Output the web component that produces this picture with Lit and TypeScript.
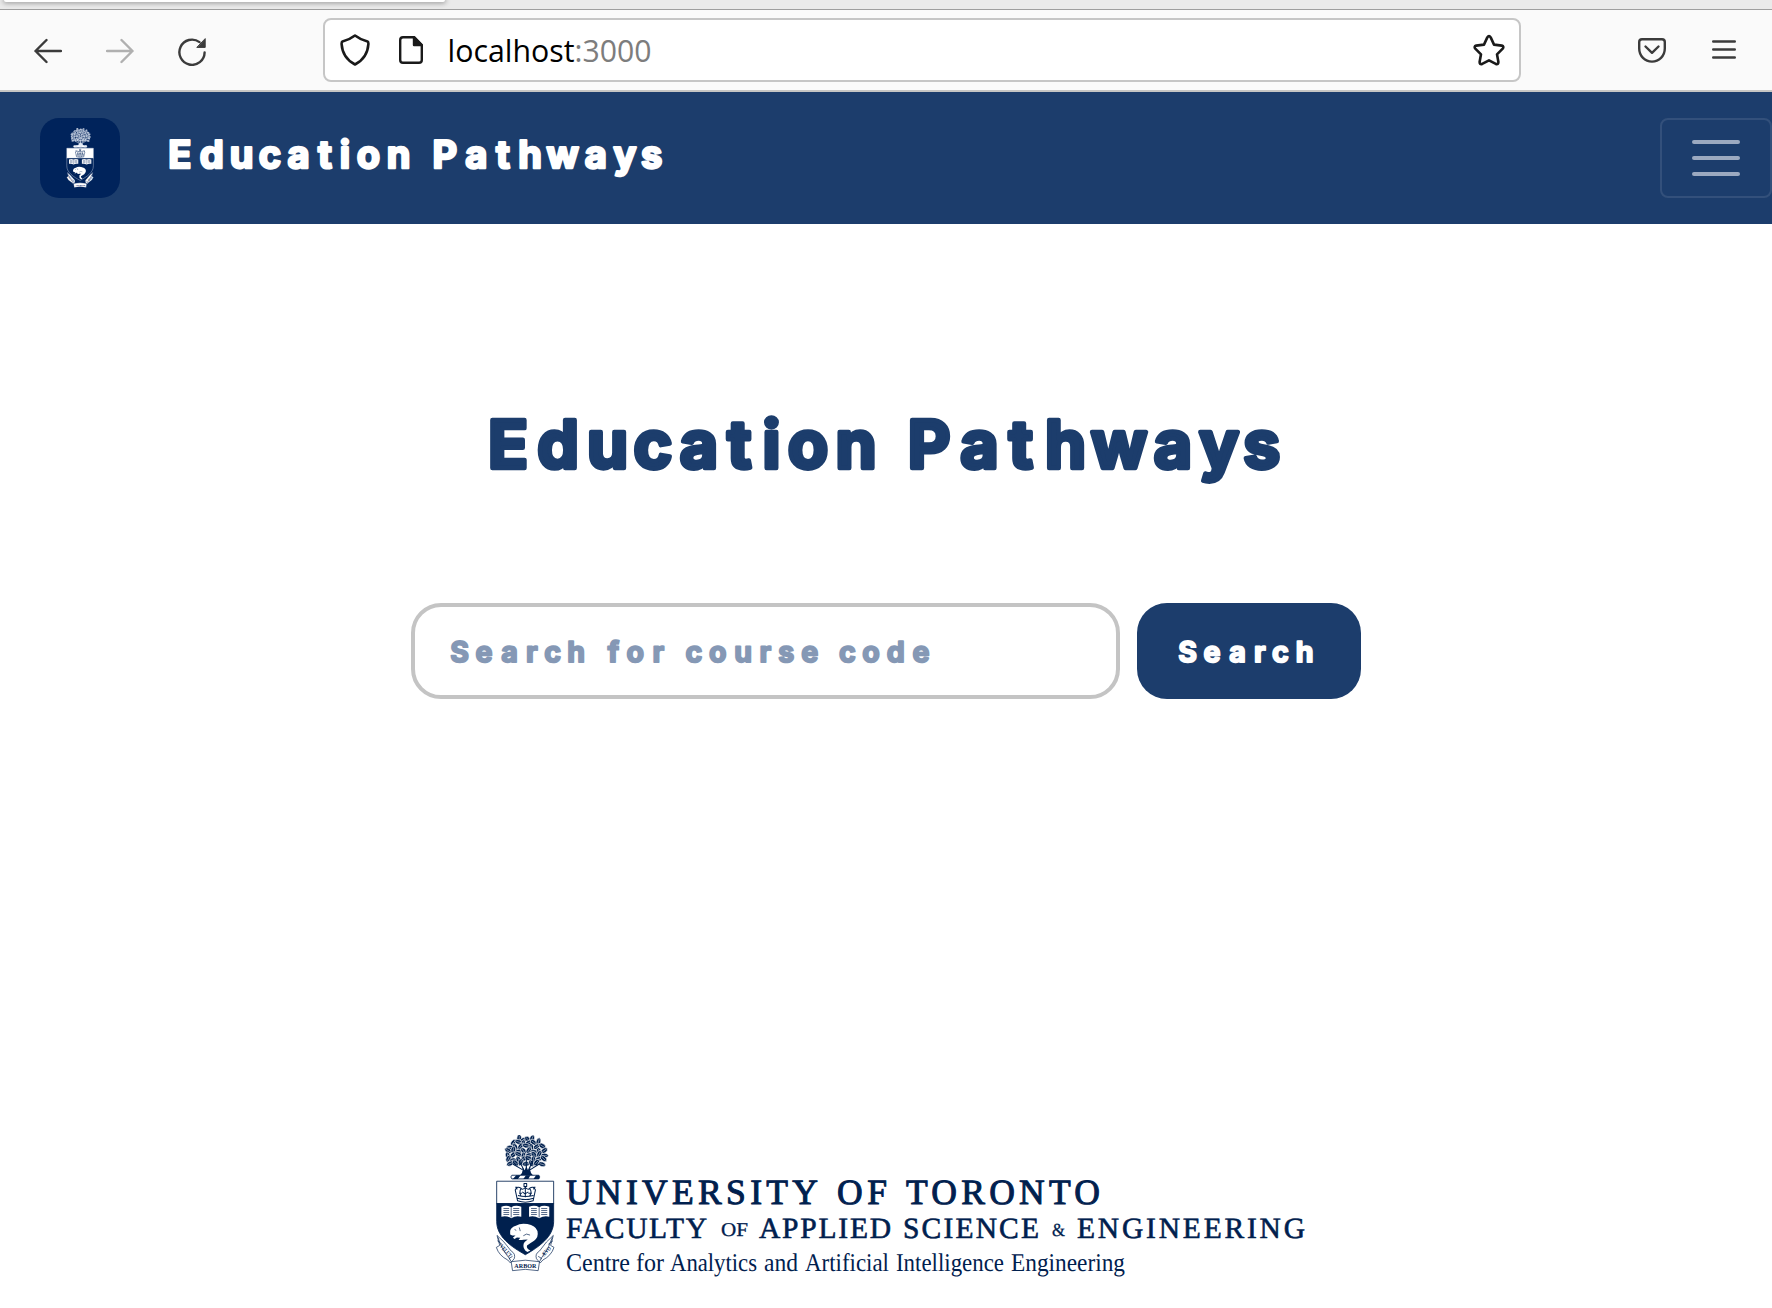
import { LitElement, html, svg, css } from "lit";
import { customElement, property, state } from "lit/decorators.js";

/** Display text in heavy rounded letters, each centred on its own x position. */
@customElement("round-text")
class RoundText extends LitElement {
  @property() text = "";
  @property({ type: Array }) centres: number[] = [];
  @property({ type: Number }) width = 100;
  @property({ type: Number }) height = 40;
  @property({ type: Number }) baseline = 30;
  @property({ type: Number }) size = 28;
  static styles = css`
    :host { display: block; line-height: 0; }
    text {
      font-family: Inter, "Open Sans", sans-serif;
      font-weight: 700;
      fill: currentColor;
      stroke: currentColor;
      stroke-linejoin: round;
      text-anchor: middle;
      text-rendering: geometricPrecision;
    }
  `;
  /** Narrow or lopsided letters sit off the centre of their advance width. */
  private place(c: number, i: number) {
    const shift: Record<string, number> = { t: -0.01, E: -0.03, P: -0.015, r: -0.01, a: 0.015, s: -0.02 };
    return c + (shift[this.text[i]] ?? 0) * this.size;
  }
  render() {
    return html`<svg width=${this.width} height=${this.height} role="img" aria-label=${this.text}>
      <text x=${this.centres.map((c, i) => this.place(c, i)).join(" ")} y=${this.baseline - this.size * 0.03}
        font-size=${this.size} stroke-width=${this.size * 0.066}>${this.text}</text>
    </svg>`;
  }
}

const LEAVES: number[][] = [];
[[55, 118, 156, 4], [65, 101, 175, 6], [77, 90, 186, 7], [90, 85, 192, 8], [102, 84, 193, 8], [115, 86, 190, 8], [127, 91, 185, 7]]
  .forEach(([y, from, to, n], row) => {
    for (let i = 0; i < n; i++) {
      LEAVES.push([from + ((to - from) * i) / (n - 1), y + ((i * 5 + row * 3) % 7) - 3, ((i * 67 + row * 41) % 180) - 90]);
    }
  });

/** University coat of arms: oak tree, shield and motto scroll. */
@customElement("uoft-crest")
class UoftCrest extends LitElement {
  static styles = css`
    :host { display: block; line-height: 0; --line: #00204e; --ground: #fff; --navy: #00204e; }
    svg { width: 100%; height: 100%; display: block; }
    .leaf { fill: var(--line); stroke: var(--ground); stroke-width: 1.8; }
    .vein { fill: none; stroke: var(--ground); stroke-width: 1.3; }
    .branch { fill: none; stroke: var(--line); stroke-width: 3; stroke-linecap: round; }
    .solid { fill: var(--line); }
    .outline { fill: #fff; stroke: var(--line); stroke-width: 2.5; }
    .field { fill: var(--navy); stroke: var(--line); stroke-width: 2.5; }
    .white { fill: #fff; }
    .ink { fill: none; stroke: var(--navy); stroke-width: 2; stroke-linejoin: round; }
    .crown { fill: none; stroke: var(--navy); stroke-width: 3; stroke-linejoin: round; }
    .scroll { fill: #fff; stroke: var(--navy); stroke-width: 2; stroke-linejoin: round; }
    .motto { font: 700 17px "Liberation Serif", serif; fill: var(--navy); text-anchor: middle; }
  `;
  render() {
    return html`<svg viewBox="46 42 178 412" preserveAspectRatio="none" aria-hidden="true">
      ${LEAVES.map(([x, y, r]) => svg`<g transform="translate(${x} ${y}) rotate(${r})">
        <path class="leaf" d="M-12 0Q-8-8 0-7Q9-8 12 0Q9 7 0 7Q-8 8-12 0Z" /><path class="vein" d="M-7 0H8" /></g>`)}
      <path class="branch" d="M100 130L127 146M118 120L131 146M139 108V152M158 120L146 146M176 130L151 146" />
      <path class="solid" d="M127 138Q132 158 114 166H165Q147 158 151 138L144 148L139 136L134 148Z" />
      <path class="outline" d="M96 163H176Q182 168 176 174H96Q90 168 96 163Z" />
      <path class="solid" d="M99 174L109 163H122L114 174ZM130 174L138 163H151L145 174ZM160 174L168 163H177V174Z" />

      <path class="scroll" d="M52 344Q72 360 94 391Q108 399 103 414L92 427L84 418Q58 405 50 380L60 374Z" />
      <path class="scroll" d="M219 344Q199 360 178 391Q164 399 169 414L180 427L188 418Q213 405 221 380L211 374Z" />
      <path class="ink" d="M55 350Q64 384 91 416M216 350Q207 384 181 416M53 360L67 371M218 360L204 371" />

      <path class="outline" d="M51 181H220V249H51Z" />
      <path class="field" d="M51 248H220V302C220 348 177 378 136 402C94 378 51 348 51 302Z" />

      <path class="crown" d="M113 240L106 207Q112 194 123 202Q128 209 136 199Q144 209 149 202Q160 194 166 207L159 240Q136 248 113 240ZM113 232Q136 240 160 232M114 224Q136 230 160 224M123 203Q117 214 123 225M136 196V229M149 203Q157 214 149 225M132 188H140V197H132ZM106 199H111V206M161 206V199H166" />
      <path class="crown" d="M118 217H126M145 217H155M126 236H131M141 236H148M127 213L135 219L145 213" />

      <path class="white" d="M65 258Q81 251 94 259Q108 251 124 258V288Q108 284 94 292Q80 284 65 288ZM147 258Q163 251 177 259Q191 251 207 258V288Q192 284 177 292Q162 284 147 288Z" />
      <path class="ink" d="M94 259V290M177 259V290M71 263H88M71 269H88M71 275H88M71 281H88M100 263H118M100 269H118M100 275H118M100 281H118M153 263H170M153 269H170M153 275H170M153 281H170M183 263H201M183 269H201M183 275H201M183 281H201" />

      <path class="white" d="M91 330Q94 319 108 315Q122 306 142 310Q166 314 172 331Q176 350 162 360Q151 367 141 374Q138 383 151 389L142 394Q127 385 131 369Q134 362 143 356L130 357Q122 359 116 357L121 351L111 350L104 355L99 351L107 344H97L91 341Z" />
      <path class="ink" stroke-width="1.2" d="M104 326L109 329M118 320L121 331M130 345Q139 336 150 343" />

      <path class="scroll" d="M94 423Q136 414 178 423L174 450Q136 442 98 450Z" />
      <path class="ink" d="M94 423L88 413L98 407M178 423L184 413L174 407" />
      <text class="motto" x="136" y="441" textLength="65" lengthAdjust="spacingAndGlyphs">ARBOR</text>
      <text class="motto" transform="translate(74 394) rotate(48)" textLength="44" lengthAdjust="spacingAndGlyphs">VELUT</text>
      <text class="motto" transform="translate(202 396) rotate(-48)" textLength="34" lengthAdjust="spacingAndGlyphs">ÆVO</text>
    </svg>`;
  }
}

type Word = [text: string, x: number, end: number, y: number, size: number, weight: number];
const SIGNATURE: Word[] = [
  ["UNIVERSITY", 566, 818, 1204, 35.5, 1],
  ["OF", 837, 887, 1204, 35.5, 1],
  ["TORONTO", 906, 1100, 1204, 35.5, 1],
  ["FACULTY", 566, 707, 1238, 29.5, 0.6],
  ["OF", 721, 748, 1236, 19.5, 0.3],
  ["APPLIED", 759, 891, 1238, 29.5, 0.6],
  ["SCIENCE", 903, 1039, 1238, 29.5, 0.6],
  ["&", 1052, 1065, 1236, 18.5, 0.3],
  ["ENGINEERING", 1077, 1305, 1238, 29.5, 0.6],
  ["Centre", 566, 630, 1271, 25.5, 0],
  ["for", 636, 664, 1271, 25.5, 0],
  ["Analytics", 670, 757, 1271, 25.5, 0],
  ["and", 764, 798, 1271, 25.5, 0],
  ["Artificial", 805, 889, 1271, 25.5, 0],
  ["Intelligence", 896, 1004, 1271, 25.5, 0],
  ["Engineering", 1011, 1125, 1271, 25.5, 0],
];

const NAV = [21, 51.7, 81.7, 110, 138, 165.3, 185, 208.3, 238.7, 262, 285.3, 315.7, 343.3, 370, 402.7, 435.3, 465, 492.3];
const HERO = [510, 558, 607.5, 653, 698, 740, 771.5, 808, 856, 893, 930, 978.5, 1021.5, 1065.5, 1119, 1172, 1219, 1263].map((v) => v - 486);
const HINT = [459.7, 484, 509, 532, 552.7, 576, 596, 613.3, 635.3, 658.5, 676, 694, 717.7, 743, 765.7, 786.7, 809.7, 828, 847.3, 871, 895.7, 921].map((v) => v - 415);
const GO = [1187.5, 1212, 1237, 1260, 1280.5, 1304.5].map((v) => v - 1137);

@customElement("app-root")
class AppRoot extends LitElement {
  @state() query = "";

  static styles = css`
    * { box-sizing: border-box; }
    :host { display: flex; flex-direction: column; height: 1308px; overflow: hidden; background: #fff; font-family: "Open Sans", sans-serif; }
    .tabs { height: 10px; flex: none; background: #eaeaea; border-bottom: 1px solid #9e9e9e; overflow: hidden; }
    .tab { width: 441px; height: 2px; margin-left: 4px; background: #fff; border-radius: 0 0 6px 6px; box-shadow: 0 0 5px 1px rgba(0, 0, 0, 0.4); }
    .toolbar { height: 82px; flex: none; display: flex; align-items: center; padding-left: 34px; background: #fafafa; border-bottom: 2px solid #c6c6c4; color: #3b3b3b; }
    svg { display: block; flex: none; }
    .icon { fill: none; stroke: currentColor; stroke-width: 2.4; stroke-linecap: round; stroke-linejoin: round; }
    .forward { margin: 0 44px; color: #b0b0b0; }
    .address { width: 1198px; height: 64px; margin: 0 117px; padding: 0 14px 0 15px; display: flex; align-items: center; background: #fff; border: 2px solid #c6c6c6; border-radius: 8px; color: #1a1a1a; }
    .page-icon { margin-left: 29px; }
    .url { margin-left: 23px; font: 31px "Open Sans", sans-serif; }
    .host { fill: #000; }
    .port { fill: #7d7d7d; }
    .star { margin-left: auto; }
    .menu { margin-left: 46px; }
    .navbar { height: 132px; flex: none; display: flex; align-items: center; padding-left: 40px; background: #1c3d6c; color: #fff; }
    .badge { width: 80px; height: 80px; display: flex; justify-content: center; padding-top: 10px; border-radius: 19px; background: #00235b; }
    .badge uoft-crest { width: 28px; height: 60px; --line: #e2e9f4; --ground: #00235b; --navy: #00235b; }
    .brand { margin-left: 40px; }
    .toggler { width: 112px; height: 80px; margin-left: auto; padding: 0 0 0 30px; display: flex; flex-direction: column; justify-content: center; gap: 12px; background: none; border: 2px solid rgba(255, 255, 255, 0.1); border-radius: 8px; }
    .bar { width: 48px; height: 4px; border-radius: 2px; background: #9ba9c0; }
    .hero { display: flex; flex-direction: column; align-items: center; padding-top: 181px; color: #1c3d6c; }
    .search { display: flex; gap: 17px; margin-top: 108px; }
    .field { display: grid; width: 709px; height: 96px; border: 4px solid #c4c4c4; border-radius: 30px; }
    .field > * { grid-area: 1 / 1; }
    .hint { color: #8598b5; pointer-events: none; }
    .input { width: 100%; padding: 0 34px; border: 0; outline: 0; background: transparent; color: #1c3d6c; font: 700 29px Inter, sans-serif; letter-spacing: 6px; }
    .go { width: 224px; height: 96px; padding: 0; border: 0; border-radius: 30px; background: #1c3d6c; color: #fff; }
    .footer { display: flex; margin-top: 434px; padding-left: 495px; }
    .footer uoft-crest { width: 60px; height: 137px; margin-top: 2px; }
    .signature { font-family: "Liberation Serif", serif; fill: #00204e; stroke: #00204e; text-rendering: geometricPrecision; }
  `;

  private onInput(e: Event) {
    this.query = (e.target as HTMLInputElement).value;
  }

  render() {
    return html`
      <div class="tabs"><div class="tab"></div></div>
      <div class="toolbar">
        <svg class="icon" width="28" height="32"><path d="M27 17H1.5M12.5 6L1.5 17L12.5 28" /></svg>
        <svg class="icon forward" width="28" height="32"><path d="M1 17H26.5M15.5 6L26.5 17L15.5 28" /></svg>
        <svg class="icon" width="28" height="32">
          <path d="M26.6 18.4A12.6 12.6 0 1 1 21.5 8.1" />
          <path d="M27.2 5V13.4H19.2Z" fill="currentColor" stroke-width="1" />
        </svg>
        <div class="address">
          <svg class="icon" width="30" height="32"><path stroke-width="2.6" d="M15 1.5Q21 6 27.5 7.5Q28.5 8 28.4 10Q27.5 24 15 30.5Q2.5 24 1.6 10Q1.5 8 2.5 7.5Q9 6 15 1.5Z" /></svg>
          <svg class="icon page-icon" width="24" height="32">
            <path d="M4 3.2H15L22.8 11V26Q22.8 28.8 20 28.8H4Q1.2 28.8 1.2 26V6Q1.2 3.2 4 3.2Z" />
            <path d="M15 3.2V11H22.8Z" fill="currentColor" />
          </svg>
          <svg class="url" width="210" height="44">
            <text class="host" x="1.5" y="34" textLength="127" lengthAdjust="spacingAndGlyphs">localhost</text>
            <text class="port" x="128.5" y="34" textLength="77" lengthAdjust="spacingAndGlyphs">:3000</text>
          </svg>
          <svg class="icon star" width="32" height="32"><path stroke-width="2.6" d="M14.3 3.4Q16 .8 17.7 3.4L21 10.6L28.8 11.6Q31.4 12.4 29.7 14.6L24 20.3L25.4 28Q25.4 30.8 22.8 29.9L16 26.4L9.2 29.9Q6.6 30.8 6.6 28L8 20.3L2.3 14.6Q.6 12.4 3.2 11.6L11 10.6Z" /></svg>
        </div>
        <svg class="icon" width="28" height="32"><path d="M4 5.2H24Q26.8 5.2 26.8 8V14.5C26.8 22 21 27.6 14 27.6S1.2 22 1.2 14.5V8Q1.2 5.2 4 5.2ZM7.5 12.5L14 18.8L20.5 12.5" /></svg>
        <svg class="icon menu" width="24" height="32"><path d="M1.2 7.5H22.8M1.2 15.5H22.8M1.2 23.5H22.8" /></svg>
      </div>
      <div class="navbar">
        <div class="badge"><uoft-crest></uoft-crest></div>
        <round-text class="brand" text="Education Pathways" .centres=${NAV} width="520" height="60" baseline="41" size="38"></round-text>
        <button class="toggler" aria-label="Toggle navigation"><span class="bar"></span><span class="bar"></span><span class="bar"></span></button>
      </div>
      <div class="hero">
        <round-text text="Education Pathways" .centres=${HERO} width="800" height="90" baseline="65" size="66"></round-text>
        <div class="search">
          <div class="field">
            ${this.query ? "" : html`<round-text class="hint" text="Search for course code" .centres=${HINT} width="600" height="88" baseline="55.5" size="28.5"></round-text>`}
            <input class="input" aria-label="Course code" .value=${this.query} @input=${this.onInput} />
          </div>
          <button class="go"><round-text text="Search" .centres=${GO} width="224" height="96" baseline="59.5" size="28.5"></round-text></button>
        </div>
      </div>
      <div class="footer">
        <uoft-crest></uoft-crest>
        <svg class="signature" width="760" height="150" viewBox="555 1133 760 150">
          ${SIGNATURE.map(([t, x, end, y, size, weight]) => svg`<text x=${x} y=${y} font-size=${size} stroke-width=${weight}
            textLength=${end - x} lengthAdjust=${size > 26 ? "spacing" : "spacingAndGlyphs"}>${t}</text>`)}
        </svg>
      </div>
    `;
  }
}
